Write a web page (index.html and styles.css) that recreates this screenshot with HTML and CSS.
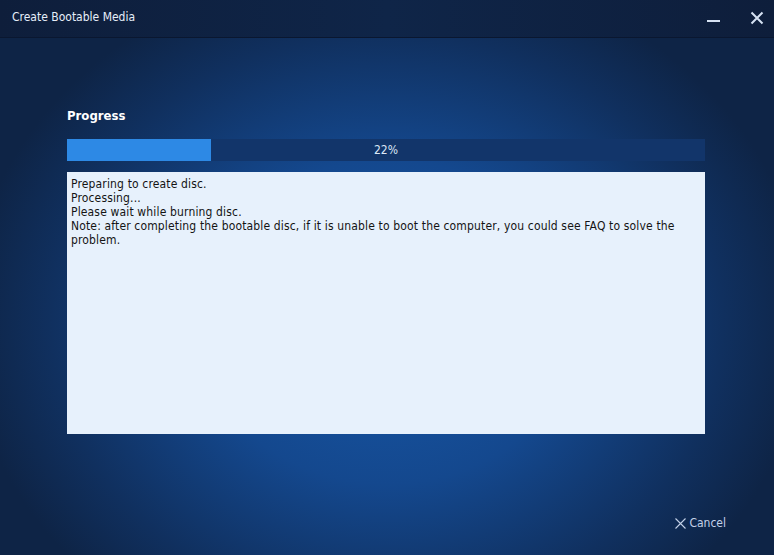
FILE: index.html
```html
<html>
<head>
    <title>Create Bootable Media</title>
    <meta charset="UTF-8">
<link rel="stylesheet" href="styles.css">
</head>
<body>
    <div id="window">
        <div id="titleBar">
            <div id="titleText">Create Bootable Media</div>
            <div id="titleButtons">
                <div class="titleButton">
                    <svg width="14" height="14" viewBox="0 0 14 14"><line x1="1" y1="10" x2="14" y2="10" stroke="#d6e2f3" stroke-width="2"/></svg>
                </div>
                <div class="titleButton">
                    <svg width="14" height="14" viewBox="0 0 14 14"><path d="M1.5 1.5 L12.5 12.5 M12.5 1.5 L1.5 12.5" stroke="#d6e2f3" stroke-width="2"/></svg>
                </div>
            </div>
        </div>
        <div id="content">
            <div id="progressHeader">Progress</div>
            <div id="progressTrack">
                <div id="progressFill" style="width: 22.6%"></div>
                <div id="progressLabel">22%</div>
            </div>
            <div id="logBox">
                Preparing to create disc.<br />
                Processing...<br />
                Please wait while burning disc.<br />
                Note: after completing the bootable disc, if it is unable to boot the computer, you could see FAQ to solve the problem.
            </div>
            <div id="footer">
                <div id="cancelButton">
                    <svg width="11" height="11" viewBox="0 0 11 11"><path d="M0.5 0.5 L10.5 10.5 M10.5 0.5 L0.5 10.5" stroke="#c3d1e8" stroke-width="1.1"/></svg>
                    <span>Cancel</span>
                </div>
            </div>
        </div>
    </div>
</body>
</html>
```

FILE: styles.css
```css
body {
    margin: 0;
    padding: 0;
    font-family: "DejaVu Sans Condensed", "Liberation Sans", sans-serif;
    font-size: 12px;
}

#window {
    width: 774px;
    height: 555px;
    display: flex;
    flex-direction: column;
    background: radial-gradient(ellipse 420px 360px at 50% 58%, #1758a8 0%, #14488e 45%, #10305f 80%, #0e2446 100%);
    overflow: hidden;
}

#titleBar {
    height: 37px;
    flex-shrink: 0;
    display: flex;
    align-items: center;
    justify-content: space-between;
    background: linear-gradient(to right, #0e1e3b, #0f2548 50%, #0e1e3b);
    border-bottom: 1px solid #0a1730;
}

#titleText {
    color: #e6eef9;
    padding-left: 12px;
    margin-top: -3px;
}

#titleButtons {
    display: flex;
    gap: 30px;
    padding-right: 10px;
    margin-top: -2px;
}

.titleButton {
    width: 14px;
    height: 14px;
}

#content {
    flex: 1;
    display: flex;
    flex-direction: column;
    padding: 0 69px 0 67px;
}

#progressHeader {
    margin-top: 70px;
    color: #ffffff;
    font-weight: bold;
    font-size: 13px;
    height: 16px;
}

#progressTrack {
    position: relative;
    margin-top: 15px;
    height: 22px;
    background-color: #12356a;
}

#progressFill {
    height: 100%;
    background-color: #2d89e5;
}

#progressLabel {
    position: absolute;
    top: 0;
    left: 0;
    right: 0;
    line-height: 22px;
    text-align: center;
    color: #dce8f7;
}

#logBox {
    margin-top: 11px;
    height: 262px;
    box-sizing: border-box;
    padding: 5px 28px 0 4px;
    background-color: #e7f1fc;
    color: #141414;
    line-height: 14px;
    letter-spacing: 0.15px;
}

#footer {
    display: flex;
    justify-content: flex-end;
    margin-top: 82px;
    margin-right: -21px;
}

#cancelButton {
    display: flex;
    align-items: center;
    gap: 3px;
    color: #c3d1e8;
    cursor: pointer;
}
```
